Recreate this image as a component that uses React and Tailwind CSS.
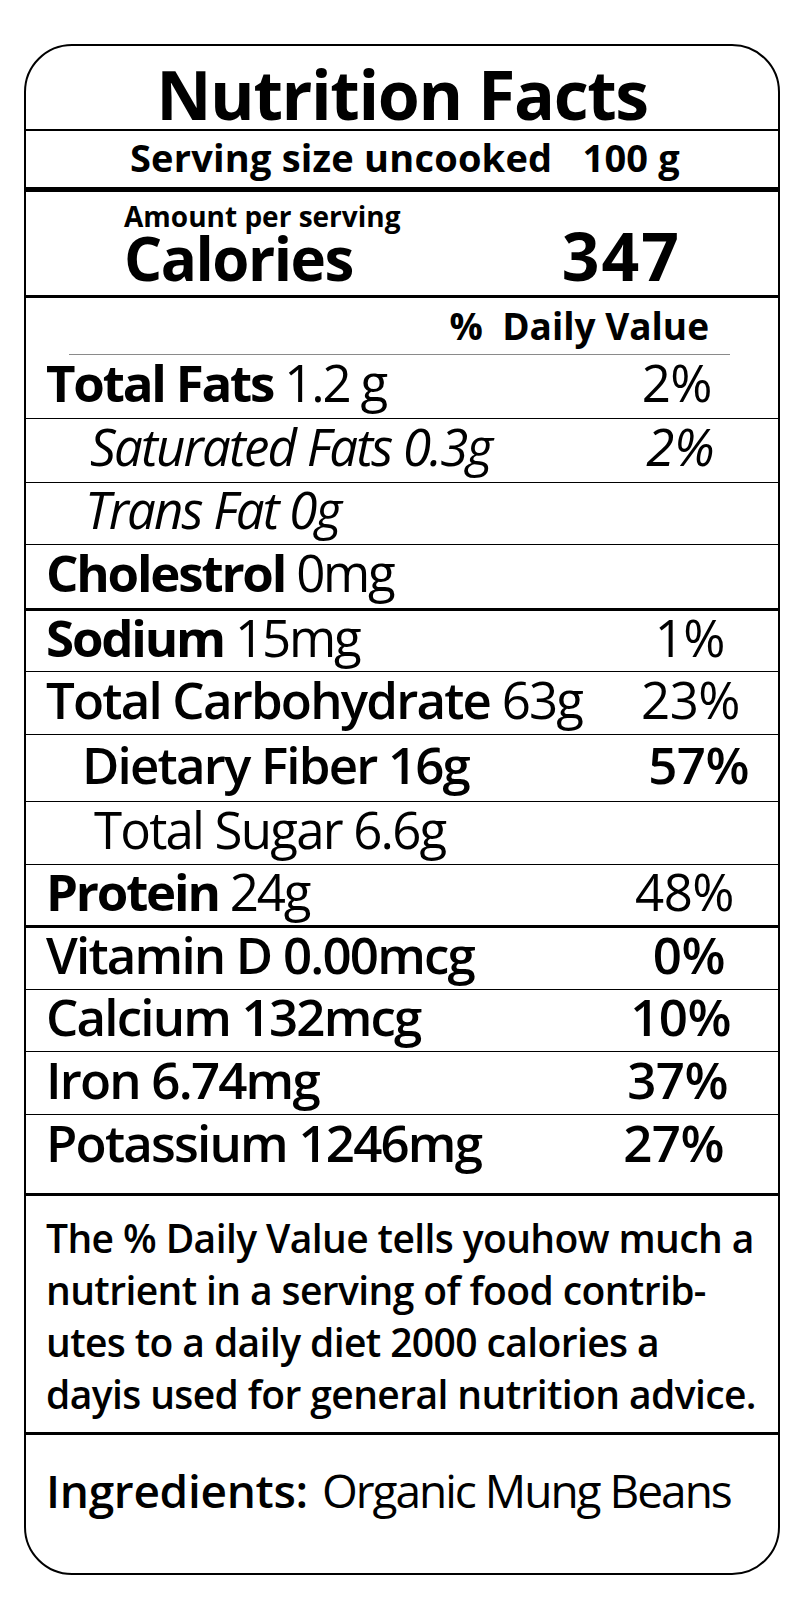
const font = "font-['Open_Sans','Liberation_Sans',sans-serif]";

const rows = [
  { label: 'Total Fats', value: '1.2 g', pct: '2%', kind: 'main', pr: 'pr-[66px]', h: 'h-[64px]' },
  { label: 'Saturated Fats 0.3g', pct: '2%', kind: 'italic', indent: 'pl-[64px]', pr: 'pr-[64px]', h: 'h-[64px]' },
  { label: 'Trans Fat 0g', kind: 'italic', indent: 'pl-[59px]', h: 'h-[62px]' },
  { label: 'Cholestrol', value: '0mg', kind: 'main', h: 'h-[66px]', line: 'border-b-[3px]' },
  { label: 'Sodium', value: '15mg', pct: '1%', kind: 'main', pr: 'pr-[53px]', h: 'h-[61px]' },
  { label: 'Total Carbohydrate', value: '63g', pct: '23%', kind: 'semi', pctW: 'font-normal', pr: 'pr-[38px]', h: 'h-[63px]' },
  { label: 'Dietary Fiber 16g', pct: '57%', kind: 'semi', indent: 'pl-[56px]', pr: 'pr-[29px]', h: 'h-[67px]' },
  { label: 'Total Sugar 6.6g', kind: 'regular', indent: 'pl-[68px]', h: 'h-[63px]' },
  { label: 'Protein', value: '24g', pct: '48%', kind: 'main', pr: 'pr-[44px]', h: 'h-[63px]', line: 'border-b-[3px]' },
  { label: 'Vitamin D 0.00mcg', pct: '0%', kind: 'semi', pr: 'pr-[53px]', h: 'h-[62px]' },
  { label: 'Calcium 132mcg', pct: '10%', kind: 'semi', pr: 'pr-[47px]', h: 'h-[62px]' },
  { label: 'Iron 6.74mg', pct: '37%', kind: 'semi', pr: 'pr-[50px]', h: 'h-[63px]' },
  { label: 'Potassium 1246mg', pct: '27%', kind: 'semi', pr: 'pr-[54px]', h: 'h-[81px] pb-[24px]', line: 'border-b-[3px]' },
];

function Row({ r }) {
  const labelCls =
    r.kind === 'main' ? 'font-bold tracking-[-2.2px]' :
    r.kind === 'italic' ? 'italic font-normal tracking-[-1.8px]' :
    r.kind === 'semi' ? 'font-semibold tracking-[-1.8px]' : 'font-normal tracking-[-1.8px]';
  const pctCls = r.pctW || (r.kind === 'semi' ? 'font-semibold' : 'font-normal');
  return (
    <div className={`flex items-center justify-between ${r.h} pb-[8px] ${r.line || 'border-b'} border-black`}>
      <div className={`${r.indent || 'pl-[20px]'} whitespace-nowrap text-[51px] leading-none ${labelCls}`}>
        {r.label}
        {r.value && <span className="font-normal"> {r.value}</span>}
      </div>
      {r.pct && (
        <div className={`${r.pr} text-[51px] leading-none tracking-[-0.5px] ${pctCls} ${r.kind === 'italic' ? 'italic' : ''}`}>
          {r.pct}
        </div>
      )}
    </div>
  );
}

export default function App() {
  return (
    <div className={`min-h-[1600px] bg-white pt-[44px] text-black ${font}`}>
      <div className="ml-[24px] h-[1531px] w-[756px] overflow-hidden rounded-[48px] border-2 border-black">
        <div className="flex h-[85px] items-end justify-center border-b-2 border-black pb-[1px]">
          <h1 className="text-[68px] font-bold leading-none tracking-[-1.4px]">Nutrition Facts</h1>
        </div>
        <div className="flex h-[61px] items-end justify-center border-b-[5px] border-black pb-[11px] pl-[6px]">
          <span className="whitespace-pre text-[38px] font-bold leading-none tracking-[0.2px]">Serving size uncooked   100 g</span>
        </div>
        <div className="flex h-[106px] items-end justify-between border-b-[3px] border-black pb-[7px] pl-[98px] pr-[97px]">
          <div className="flex flex-col">
            <span className="text-[28px] font-bold leading-none">Amount per serving</span>
            <span className="-mt-[2px] text-[60px] font-bold leading-none tracking-[-1.5px]">Calories</span>
          </div>
          <span className="text-[66px] font-bold leading-none tracking-[2px]">347</span>
        </div>
        <div className="flex h-[56px] items-end justify-end pb-[10px] pr-[69px]">
          <span className="whitespace-pre text-[37px] font-bold leading-none">%  Daily Value</span>
        </div>
        <div className="ml-[43px] mr-[48px] h-px bg-[#8a8a8a]" />
        {rows.map((r, i) => <Row key={i} r={r} />)}
        <div className="h-[239px] border-b-[3px] border-black px-[20px] pt-[16px]">
          <p className="whitespace-nowrap text-[39px] font-semibold leading-[52px] tracking-[-0.6px]">
            The % Daily Value tells youhow much a<br />
            nutrient in a serving of food contrib-<br />
            utes to a daily diet 2000 calories a<br />
            dayis used for general nutrition advice.
          </p>
        </div>
        <div className="flex items-center whitespace-nowrap px-[20px] pt-[32px]">
          <span className="text-[46px] font-semibold leading-none tracking-[-0.3px]">Ingredients:</span>
          <span className="ml-[14px] text-[46px] font-normal leading-none tracking-[-2px]">Organic Mung Beans</span>
        </div>
      </div>
    </div>
  );
}
